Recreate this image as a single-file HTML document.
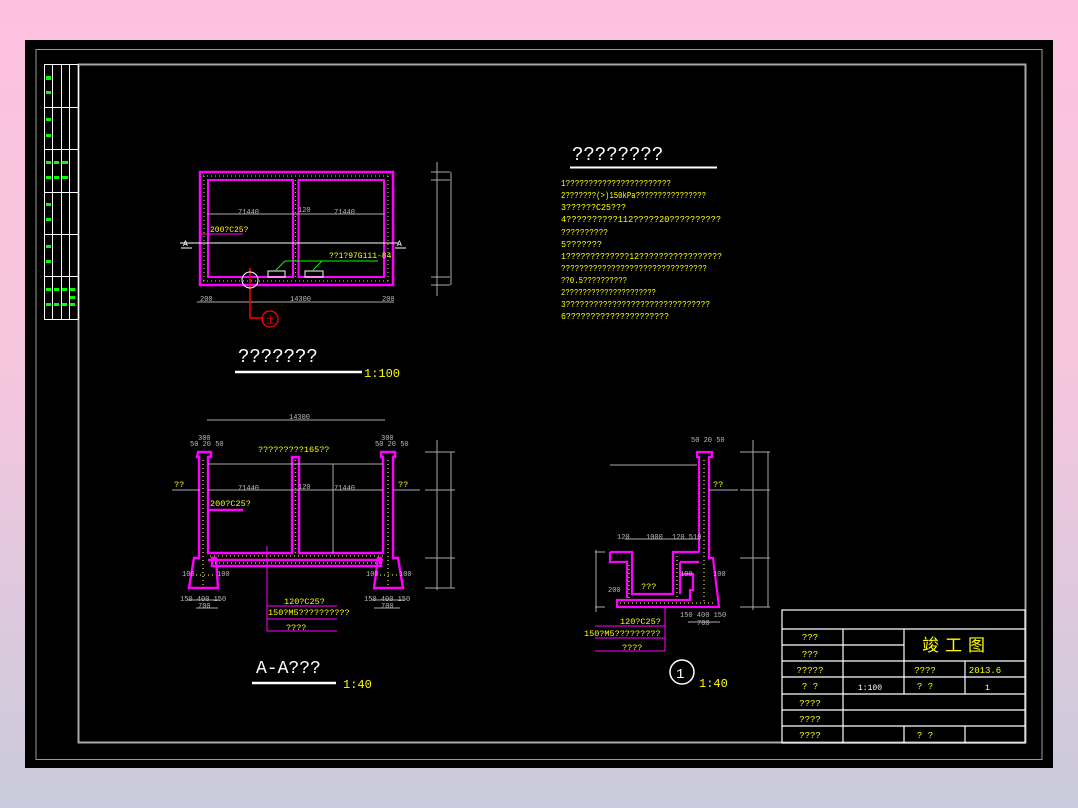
<!DOCTYPE html>
<html><head><meta charset="utf-8"><style>
html,body{margin:0;padding:0;width:1078px;height:808px;overflow:hidden;background:linear-gradient(#fdc1df,#f6c6de 45%,#c9cbdc);}
svg{position:absolute;left:0;top:0}
text{font-family:"Liberation Mono","Noto Sans CJK SC",monospace}
</style></head><body>
<svg width="1078" height="808" viewBox="0 0 1078 808">
<rect x="25" y="40" width="1028" height="728" fill="#000"/>
<rect x="36" y="49.5" width="1006" height="710" fill="none" stroke="#9a9a9a" stroke-width="1"/>
<rect x="78.5" y="64.5" width="947" height="678" fill="none" stroke="#a8a8a8" stroke-width="2"/>
<!-- left strip -->
<g stroke="#fff" stroke-width="1" fill="none">
<rect x="44.5" y="64.5" width="34" height="255"/>
<line x1="52.5" y1="64" x2="52.5" y2="320"/><line x1="61.5" y1="64" x2="61.5" y2="320"/><line x1="69.5" y1="64" x2="69.5" y2="320"/>
<line x1="44" y1="107.5" x2="78" y2="107.5"/><line x1="44" y1="149.5" x2="78" y2="149.5"/><line x1="44" y1="192.5" x2="78" y2="192.5"/><line x1="44" y1="234.5" x2="78" y2="234.5"/><line x1="44" y1="276.5" x2="78" y2="276.5"/>
</g>
<g fill="#0f0">
<rect x="46" y="76" width="5" height="4"/><rect x="46" y="91" width="5" height="3"/><rect x="46" y="118" width="5" height="3"/><rect x="46" y="134" width="5" height="3"/>
<rect x="46" y="161" width="5" height="3"/><rect x="54" y="161" width="5" height="3"/><rect x="62" y="161" width="6" height="3"/><rect x="46" y="176" width="5" height="3"/><rect x="54" y="176" width="5" height="3"/><rect x="62" y="176" width="6" height="3"/>
<rect x="46" y="203" width="5" height="3"/><rect x="46" y="218" width="5" height="3"/><rect x="46" y="245" width="5" height="3"/><rect x="46" y="260" width="5" height="3"/>
<rect x="46" y="288" width="5" height="3"/><rect x="54" y="288" width="5" height="3"/><rect x="62" y="288" width="5" height="3"/><rect x="70" y="288" width="5" height="3"/><rect x="70" y="296" width="5" height="3"/>
<rect x="46" y="303" width="5" height="3"/><rect x="54" y="303" width="5" height="3"/><rect x="62" y="303" width="5" height="3"/><rect x="70" y="303" width="5" height="3"/>
</g>

<!-- PLAN -->
<g fill="none" stroke-linejoin="miter">
<rect x="200" y="172" width="193" height="113" stroke="#f0f" stroke-width="2.5"/>
<rect x="208" y="180" width="85" height="97" stroke="#f0f" stroke-width="2"/>
<rect x="298.5" y="180" width="85.5" height="97" stroke="#f0f" stroke-width="2"/>
<g stroke="#b4b43c" stroke-width="1.2" stroke-dasharray="1 3">
<line x1="203" y1="176" x2="390" y2="176"/><line x1="203" y1="281" x2="390" y2="281"/><line x1="204" y1="176" x2="204" y2="281"/><line x1="388" y1="176" x2="388" y2="281"/><line x1="295.5" y1="180" x2="295.5" y2="277"/>
</g>
<g stroke="#aaa" stroke-width="1">
<line x1="207" y1="214" x2="385" y2="214"/>
<line x1="197" y1="302" x2="394" y2="302"/>
<line x1="431" y1="172" x2="450" y2="172"/><line x1="431" y1="180" x2="450" y2="180"/><line x1="431" y1="277" x2="450" y2="277"/><line x1="431" y1="285" x2="450" y2="285"/>
<line x1="437" y1="162" x2="437" y2="296"/><line x1="451" y1="172" x2="451" y2="285"/>
</g>
<line x1="180" y1="243" x2="398" y2="243" stroke="#fff" stroke-width="1"/>
<line x1="181" y1="248" x2="192" y2="248" stroke="#fff"/><line x1="395" y1="248" x2="406" y2="248" stroke="#fff"/>
<line x1="200" y1="234" x2="243" y2="234" stroke="#f0f" stroke-width="1"/>
<line x1="285" y1="261" x2="378" y2="261" stroke="#0f0" stroke-width="1"/>
<path d="M276 270 L285 261 M313 270 L322 261" stroke="#0f0"/>
<rect x="268" y="271" width="17" height="6" stroke="#fff"/><rect x="305" y="271" width="18" height="6" stroke="#fff"/>
<path d="M250 268 L250 318 L263 318" stroke="#f00" stroke-width="1.5"/>
<circle cx="270" cy="319" r="8" stroke="#f00" stroke-width="1.3"/>
<circle cx="250" cy="280" r="8" stroke="#fff" stroke-width="1"/>
<line x1="235" y1="372" x2="362" y2="372" stroke="#fff" stroke-width="2.5"/>
</g>
<g font-size="7" fill="#bbb">
<text x="238" y="214">71440</text><text x="298" y="212">120</text><text x="334" y="214">71440</text>
<text x="290" y="301">14300</text><text x="200" y="301">200</text><text x="382" y="301">200</text>
</g>
<g font-size="8" fill="#ff0"><text x="210" y="232">200?C25?</text><text x="329" y="258">??1?97G111-84</text></g>
<g font-size="8" fill="#fff"><text x="183" y="246">A</text><text x="397" y="246">A</text></g>
<text x="266" y="323" font-size="9" fill="#f00">土</text>
<text x="238" y="362" font-size="19" fill="#fff">???????</text>
<text x="364" y="377" font-size="12" fill="#ff0">1:100</text>

<!-- NOTES -->
<text x="572" y="160" font-size="19" fill="#fff">????????</text>
<line x1="570" y1="167.5" x2="717" y2="167.5" stroke="#fff" stroke-width="2"/>
<g font-size="9.5" fill="#ff0">
<text x="561" y="186" textLength="110" lengthAdjust="spacingAndGlyphs">1???????????????????????</text>
<text x="561" y="198" textLength="145" lengthAdjust="spacingAndGlyphs">2???????(>)150kPa????????????????</text>
<text x="561" y="210" textLength="65" lengthAdjust="spacingAndGlyphs">3??????C25???</text>
<text x="561" y="222" textLength="160" lengthAdjust="spacingAndGlyphs">4??????????112?????20??????????</text>
<text x="561" y="235" textLength="47" lengthAdjust="spacingAndGlyphs">??????????</text>
<text x="561" y="247" textLength="41" lengthAdjust="spacingAndGlyphs">5???????</text>
<text x="561" y="259" textLength="161" lengthAdjust="spacingAndGlyphs">1?????????????12?????????????????</text>
<text x="561" y="271" textLength="146" lengthAdjust="spacingAndGlyphs">????????????????????????????????</text>
<text x="561" y="283" textLength="66" lengthAdjust="spacingAndGlyphs">??0.5??????????</text>
<text x="561" y="295" textLength="95" lengthAdjust="spacingAndGlyphs">2?????????????????????</text>
<text x="561" y="307" textLength="149" lengthAdjust="spacingAndGlyphs">3???????????????????????????????</text>
<text x="561" y="319" textLength="108" lengthAdjust="spacingAndGlyphs">6?????????????????????</text>
</g>

<!-- SECTION A-A -->
<g fill="none">
<g stroke="#f0f" stroke-width="2.4">
<path d="M198 452 L211 452 L211 457 L208 457 L208 553 L292 553 L292 457 L299 457 L299 553 L383 553 L383 457 L381 457 L381 452 L395 452 L395 457 L393 457 L393 558 L398 558 L403 588 L374 588 L378 558 L381 558 L381 566 L212 566 L212 558 L216 558 L218 588 L189 588 L194 558 L199 558 L199 457 L197 457 Z"/>
<line x1="208" y1="560" x2="383" y2="560"/>
<line x1="208" y1="510" x2="243" y2="510"/>
</g>
<g stroke="#b4b43c" stroke-width="1.5" stroke-dasharray="1 3">
<line x1="203" y1="460" x2="203" y2="585"/><line x1="388" y1="460" x2="388" y2="585"/><line x1="295.5" y1="460" x2="295.5" y2="553"/><line x1="210" y1="556" x2="383" y2="556"/><line x1="215" y1="563" x2="380" y2="563"/>
<line x1="196" y1="575" x2="214" y2="575"/><line x1="380" y1="575" x2="398" y2="575"/>
</g>
<g stroke="#aaa" stroke-width="1">
<line x1="207" y1="420" x2="385" y2="420"/>
<line x1="208" y1="464" x2="383" y2="464"/><line x1="208" y1="490" x2="383" y2="490"/>
<line x1="172" y1="490" x2="200" y2="490"/><line x1="393" y1="490" x2="420" y2="490"/>
<line x1="333" y1="464" x2="333" y2="553"/>
<line x1="425" y1="452" x2="455" y2="452"/><line x1="425" y1="490" x2="455" y2="490"/><line x1="425" y1="558" x2="455" y2="558"/><line x1="425" y1="588" x2="455" y2="588"/>
<line x1="437" y1="440" x2="437" y2="590"/><line x1="451" y1="452" x2="451" y2="588"/>
<line x1="187" y1="600" x2="220" y2="600"/><line x1="372" y1="600" x2="405" y2="600"/>
<line x1="196" y1="608" x2="218" y2="608"/><line x1="374" y1="608" x2="400" y2="608"/>
</g>
<path d="M267 546 L267 631" stroke="#f0f" stroke-width="1"/>
<g stroke="#f0f" stroke-width="1"><line x1="267" y1="606" x2="337" y2="606"/><line x1="267" y1="619" x2="337" y2="619"/><line x1="267" y1="631" x2="337" y2="631"/></g>
<line x1="252" y1="683" x2="336" y2="683" stroke="#fff" stroke-width="2.5"/>
</g>
<g font-size="7" fill="#bbb">
<text x="289" y="419">14300</text><text x="198" y="440">300</text><text x="190" y="446">50 20 50</text><text x="381" y="440">300</text><text x="375" y="446">50 20 50</text>
<text x="238" y="490">71440</text><text x="298" y="489">120</text><text x="334" y="490">71440</text>
<text x="180" y="601">150 400 150</text><text x="364" y="601">150 400 150</text><text x="198" y="608">700</text><text x="381" y="608">700</text>
<text x="182" y="576">100</text><text x="217" y="576">100</text><text x="366" y="576">100</text><text x="399" y="576">100</text>
</g>
<g font-size="8.5" fill="#ff0">
<text x="258" y="452">?????????165??</text>
<text x="174" y="487">??</text><text x="398" y="487">??</text>
<text x="210" y="506">200?C25?</text>
<text x="284" y="604">120?C25?</text><text x="268" y="615">150?M5??????????</text><text x="286" y="630">????</text>
</g>
<text x="256" y="673" font-size="18" fill="#fff">A-A???</text>
<text x="343" y="688" font-size="12" fill="#ff0">1:40</text>

<!-- DETAIL -->
<g fill="none">
<g stroke="#f0f" stroke-width="2.2">
<path d="M699 552 L699 457 L697 457 L697 452 L712 452 L712 457 L709 457 L709 558 L713 558 L719 607 L617 607 L617 600 L690 600 L690 590 L693 590 L693 574 L680 574"/>
<path d="M610 552 L632 552 L632 594 L673 594 L673 552 L699 552"/>
<path d="M610 552 L610 562 L627 562 L627 598 M680 562 L680 594 M680 562 L699 562"/>
</g>
<g stroke="#b4b43c" stroke-width="1.5" stroke-dasharray="1 3"><line x1="704" y1="460" x2="704" y2="604"/><line x1="620" y1="603" x2="716" y2="603"/><line x1="629" y1="565" x2="629" y2="598"/><line x1="677" y1="556" x2="677" y2="598"/></g>
<g stroke="#aaa" stroke-width="1">
<line x1="610" y1="465" x2="697" y2="465"/><line x1="709" y1="490" x2="738" y2="490"/>
<line x1="740" y1="452" x2="770" y2="452"/><line x1="740" y1="490" x2="770" y2="490"/><line x1="740" y1="558" x2="770" y2="558"/><line x1="740" y1="607" x2="770" y2="607"/>
<line x1="753" y1="440" x2="753" y2="610"/><line x1="768" y1="452" x2="768" y2="607"/>
<line x1="625" y1="539" x2="700" y2="539"/><line x1="595" y1="552" x2="605" y2="552"/><line x1="595" y1="607" x2="605" y2="607"/><line x1="596" y1="550" x2="596" y2="612"/>
<line x1="688" y1="622" x2="720" y2="622"/>
</g>
<path d="M665 607 L665 651" stroke="#f0f" stroke-width="1"/>
<g stroke="#f0f" stroke-width="1"><line x1="595" y1="626" x2="665" y2="626"/><line x1="595" y1="638" x2="665" y2="638"/><line x1="595" y1="651" x2="665" y2="651"/></g>
<circle cx="682" cy="672" r="12" stroke="#fff" stroke-width="1.5"/>
</g>
<g font-size="7" fill="#bbb">
<text x="691" y="442">50 20 50</text><text x="617" y="539">120</text><text x="646" y="539">1000</text><text x="672" y="539">120 510</text>
<text x="680" y="576">100</text><text x="713" y="576">100</text><text x="608" y="592">200</text>
<text x="680" y="617">150 400 150</text><text x="697" y="625">700</text>
</g>
<g font-size="8.5" fill="#ff0">
<text x="713" y="487">??</text><text x="641" y="589">???</text>
<text x="620" y="624">120?C25?</text><text x="584" y="636">150?M5?????????</text><text x="622" y="650">????</text>
</g>
<text x="676" y="678" font-size="14" fill="#fff">1</text>
<text x="699" y="687" font-size="12" fill="#ff0">1:40</text>

<!-- TITLE BLOCK -->
<g stroke="#fff" stroke-width="1.2" fill="none">
<rect x="782" y="610" width="243" height="133"/>
<line x1="782" y1="629" x2="1025" y2="629"/>
<line x1="782" y1="645" x2="904" y2="645"/>
<line x1="782" y1="661" x2="1025" y2="661"/>
<line x1="782" y1="677" x2="1025" y2="677"/>
<line x1="782" y1="694" x2="1025" y2="694"/>
<line x1="782" y1="710" x2="1025" y2="710"/>
<line x1="782" y1="726" x2="1025" y2="726"/>
<line x1="843" y1="629" x2="843" y2="743"/>
<line x1="904" y1="629" x2="904" y2="694"/><line x1="904" y1="726" x2="904" y2="743"/>
<line x1="965" y1="661" x2="965" y2="694"/><line x1="965" y1="726" x2="965" y2="743"/>
</g>
<g font-size="9" fill="#ff0" text-anchor="middle">
<text x="810" y="640">???</text><text x="810" y="657">???</text><text x="810" y="673">?????</text><text x="810" y="689">? ?</text>
<text x="810" y="706">????</text><text x="810" y="722">????</text><text x="810" y="738">????</text>
<text x="925" y="673">????</text><text x="985" y="673">2013.6</text><text x="925" y="689">? ?</text><text x="925" y="738">? ?</text>
</g>
<g font-size="8" fill="#fff"><text x="858" y="690">1:100</text><text x="985" y="690">1</text></g>
<text x="922" y="651" font-size="17" fill="#ff0" font-family="'Noto Sans CJK SC',sans-serif" letter-spacing="6">竣工图</text>
</svg>
</body></html>
